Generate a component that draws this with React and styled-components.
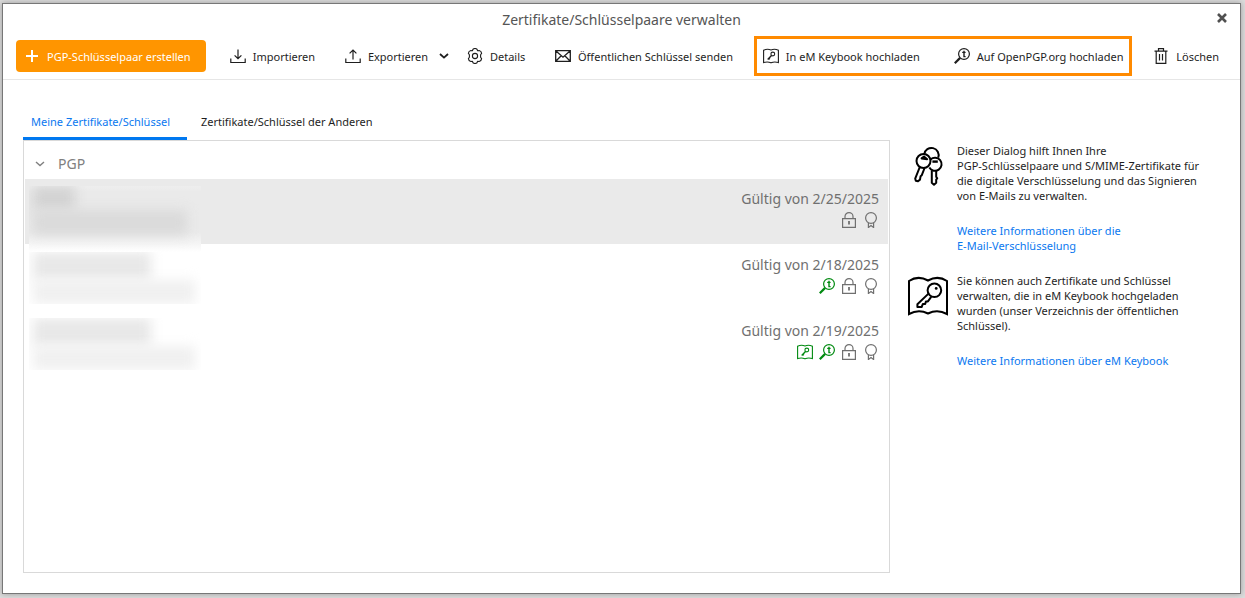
import React, { Component } from 'react'
import styled, { createGlobalStyle } from 'styled-components'

const GlobalStyle = createGlobalStyle`
  * {
    box-sizing: border-box;
  }
  body {
    margin: 0;
    background-color: #dcdcdc;
    color: #1e1e1e;
    font-family: "Noto Sans", "Open Sans", sans-serif;
    font-size: 11px;
    line-height: 15px;
  }
  button {
    padding: 0;
    border: 0;
    background: none;
    color: inherit;
    font: inherit;
    white-space: nowrap;
    cursor: pointer;
  }
  p, h1, h2, ul {
    margin: 0;
    padding: 0;
    font: inherit;
    list-style: none;
  }
`
const Page = styled.div`
  display: flex;
  min-height: 100vh;
  padding: 3px 4px 4px 2px;
`
const Dialog = styled.main`
  flex: 1;
  min-width: 0;
  display: flex;
  flex-direction: column;
  border: 1px solid #777777;
  background-color: white;
  box-shadow: 0 0 6px rgba(0, 0, 0, 0.3);
`
const TitleBar = styled.header`
  display: grid;
  grid-template-columns: 36px 1fr 36px;
  align-items: center;
  height: 32px;
`
const Title = styled.h1`
  grid-column: 2;
  color: #555555;
  font-size: 14px;
  line-height: 20px;
  text-align: center;
`
const CloseButton = styled.button`
  display: flex;
  align-items: center;
  justify-content: center;
  height: 24px;
  margin-bottom: 4px;
  color: #505050;
`
const Toolbar = styled.nav`
  display: flex;
  align-items: center;
  justify-content: space-between;
  height: 44px;
  padding: 0 21px 3px 13px;
  border-bottom: 1px solid #e6e6e6;
`
const PrimaryButton = styled.button`
  display: flex;
  align-items: center;
  gap: 7px;
  flex: none;
  width: 190px;
  height: 32px;
  margin-right: -6px;
  padding: 0 8px;
  border-radius: 4px;
  background-color: #ff9500;
  color: white;
`
const ToolButton = styled.button`
  display: flex;
  align-items: center;
  gap: 7px;
  height: 32px;
`
const DropArrow = styled.span`
  margin: 0 -12px 0 4px;
`
const Highlight = styled.div`
  display: flex;
  align-items: center;
  gap: 34px;
  height: 40px;
  margin: 0 -9px;
  padding: 0 6px;
  border: 3px solid #ff8a00;
`
const Content = styled.div`
  flex: 1;
  display: flex;
  gap: 18px;
  padding: 24px 28px 20px 20px;
`
const ListColumn = styled.section`
  flex: 1;
  min-width: 0;
  display: flex;
  flex-direction: column;
`
const Tabs = styled.div`
  display: flex;
  gap: 6px;
`
const Tab = styled.button`
  height: 36px;
  padding: 1px 17px 0 8px;
  border-bottom: 3px solid ${props => props.$active ? '#0078f0' : 'transparent'};
  color: ${props => props.$active ? '#0a78f0' : '#1e1e1e'};
`
const Panel = styled.div`
  flex: 1;
  padding: 0 1px;
  border: 1px solid #d9d9d9;
`
const GroupButton = styled.button`
  display: flex;
  align-items: center;
  gap: 13px;
  height: 38px;
  padding: 7px 0 0 10px;
  color: #808080;
  font-size: 14px;
`
const Row = styled.li`
  display: flex;
  justify-content: space-between;
  height: 66px;
  padding: 7px 9px 0 4px;
  background: ${props => props.$selected ? 'linear-gradient(#eaeaea 65px, white 65px)' : 'none'};
`
const Redacted = styled.div`
  width: 172px;
  height: ${props => props.$selected ? 66 : 52}px;
  overflow: hidden;
  background: ${props => props.$selected ? 'linear-gradient(#eeeeee, #eaeaea 6px, #eaeaea 46px, #f5f5f5 58px, white)' : 'none'};
`
const Smudge = styled.div`
  width: ${props => props.$width}px;
  height: ${props => props.$height}px;
  margin-left: 4px;
  background-color: ${props => props.$color};
  filter: blur(6px);
`
const Validity = styled.div`
  display: flex;
  flex-direction: column;
  align-items: flex-end;
  gap: 1px;
  padding-top: 1px;
  color: #707070;
  font-size: 14px;
  line-height: 24px;
`
const RowIcons = styled.div`
  display: flex;
  gap: 6px;
  color: #707070;
`
const Green = styled.span`
  display: flex;
  color: #008a10;
`
const Sidebar = styled.aside`
  flex: 0 0 304px;
  display: flex;
  flex-direction: column;
  gap: 20px;
  padding-top: 39px;
`
const Hint = styled.div`
  display: grid;
  grid-template-columns: 40px 1fr;
  gap: 9px;
`
const HintIcon = styled.div`
  padding-top: 3px;
  color: black;
`
const HintText = styled.div`
  display: flex;
  flex-direction: column;
  gap: 20px;
`
const Link = styled.a`
  color: #0a78f0;
  text-decoration: none;
`
const Svg = styled.svg`
  display: block;
  flex: none;
  fill: none;
  stroke: currentColor;
`

const Icon = ({ size = 16, children, ...rest }) => (
  <Svg width={size} height={size} viewBox={`0 0 ${size} ${size}`} aria-hidden='true' {...rest}>
    {children}
  </Svg>
)

const PlusIcon = () => (
  <Icon strokeWidth='2'><path d='M8 2v12M2 8h12' /></Icon>
)
const CloseIcon = () => (
  <Icon size={10} strokeWidth='2.6'><path d='M1 1l8 8M9 1l-8 8' /></Icon>
)
const ImportIcon = () => (
  <Icon strokeWidth='1.2'>
    <path d='M8 1.5v9.2M4.6 7.3L8 10.7l3.4-3.4M.8 10.5v4h14.4v-4' />
  </Icon>
)
const ExportIcon = () => (
  <Icon strokeWidth='1.2'>
    <path d='M8 11.5V2M4.6 5.4L8 2l3.4 3.4M.8 10.5v4h14.4v-4' />
  </Icon>
)
const ChevronIcon = ({ bold }) => (
  <Icon size={10} strokeWidth={bold ? 1.8 : 1.4}><path d='M1 3l4 3.6L9 3' /></Icon>
)
const GearIcon = () => (
  <Icon strokeWidth='1.1'>
    <path d='M6 1.2Q8-.2 10 1.2l.6 1.5 1.6-.2q2.2.6 2.4 2.9l-1 1.4v2.4l1 1.4q-.2 2.3-2.4 2.9l-1.6-.2-.6 1.5Q8 16.2 6 14.8l-.6-1.5-1.6.2q-2.2-.6-2.4-2.9l1-1.4V6.8l-1-1.4q.2-2.3 2.4-2.9l1.6.2z' strokeLinejoin='round' />
    <circle cx='8' cy='8' r='2.6' />
  </Icon>
)
const MailIcon = () => (
  <Icon strokeWidth='1.3'>
    <path d='M.7 2.7h14.6v10.6H.7zM1 3l7 6.2L15 3M1 13l5.2-5.3M15 13L9.8 7.7' />
  </Icon>
)
const KeybookIcon = () => (
  <Icon strokeWidth='1.1'>
    <path d='M.6 2.2Q4.5.4 8 2 11.5.4 15.4 2.2V14.6Q11.5 13.2 8 14.8 4.5 13.2.6 14.6z' />
    <circle cx='9.8' cy='6' r='1.9' />
    <path d='M8.5 7.4l-3.8 4M5.8 10.2l1.1 1' strokeWidth='1.4' />
  </Icon>
)
const OpenPgpIcon = () => (
  <Icon strokeWidth='1.2'>
    <circle cx='10' cy='6' r='5.4' />
    <path d='M6.1 9.9L.8 15.2' strokeWidth='2.2' />
    <path d='M10 2.8v5.8h1.6' strokeWidth='1.4' />
    <path d='M8.2 4.4h3.4' />
  </Icon>
)
const TrashIcon = () => (
  <Icon strokeWidth='1.2'>
    <path d='M1.5 3.2h13M5.5 3V.7h5V3M3.2 3.4v11.9h9.6V3.4M6.5 6v6.5M9.5 6v6.5' />
  </Icon>
)
const LockIcon = () => (
  <Icon strokeWidth='1.2'>
    <path d='M1.6 6.6h12.8v8.8H1.6zM4 6.5V4.4a4 3.8 0 0 1 8 0v2.1' />
    <path d='M8 9v3.5' strokeWidth='1.8' />
  </Icon>
)
const RibbonIcon = () => (
  <Icon strokeWidth='1.2'>
    <circle cx='8' cy='6' r='5.4' />
    <path d='M5.4 11v4.5L8 13.6l2.6 1.9V11' />
  </Icon>
)
const KeysIcon = () => (
  <Icon size={40} strokeWidth='2' strokeLinejoin='round'>
    <path d='M16.3 8.2a7.2 7.2 0 1 1 13.9 3.4' />
    <circle cx='15.5' cy='15' r='7' />
    <path d='M22.5 13.4a6.6 6.6 0 1 1-1.2 8.2' />
    <path d='M11.8 21L7.2 32.6l.6 2.2 2.2.4 2-1.6.6-3.4 1.2-1 2.8-7.2' />
    <path d='M23.8 24.2v12.6l2.2 2 2.2-2v-3.2l1-1.2-1-1.6v-6.2' />
    <path d='M16 10.6l3.2 2.6-5.6-.8z' fill='currentColor' />
    <path d='M24.4 15.6h5.4' strokeWidth='2.4' />
  </Icon>
)
const BigBookIcon = () => (
  <Icon size={40} strokeWidth='2'>
    <path d='M1 5Q10-1 20 4.5 30-1 39 5V38Q29.5 33 20 37.5 10.5 33 1 38z' />
    <circle cx='26.4' cy='14.3' r='6.8' />
    <circle cx='28.2' cy='12.4' r='1.4' fill='currentColor' stroke='none' />
    <path d='M20.5 17.6L9.4 28.2v2.9h4.2l1.2-3h2.4l.7-2.7h2l3.3-4.6' strokeLinejoin='round' />
  </Icon>
)

const certificates = [
  { date: '2/25/2025', selected: true, smudges: [[42, 24, '#d3d3d3'], [154, 25, '#dadada']] },
  { date: '2/18/2025', openPgp: true, smudges: [[118, 28, '#e8e8e8'], [162, 24, '#f0f0f0']] },
  { date: '2/19/2025', openPgp: true, keybook: true, smudges: [[118, 28, '#e8e8e8'], [162, 24, '#f0f0f0']] }
]

const CertificateRow = ({ date, selected, openPgp, keybook, smudges }) => (
  <Row $selected={selected}>
    <Redacted $selected={selected}>
      {smudges.map(([width, height, color]) => (
        <Smudge key={width} $width={width} $height={height} $color={color} />
      ))}
    </Redacted>
    <Validity>
      <span>Gültig von {date}</span>
      <RowIcons>
        {keybook && <Green><KeybookIcon /></Green>}
        {openPgp && <Green><OpenPgpIcon /></Green>}
        <LockIcon />
        <RibbonIcon />
      </RowIcons>
    </Validity>
  </Row>
)

class App extends Component {
  state = {
    tab: 'mine'
  }
  selectTab = (tab) => {
    this.setState({ tab })
  }
  render() {
    const { tab } = this.state
    return (
      <Page>
        <GlobalStyle />
        <Dialog>
          <TitleBar>
            <Title>Zertifikate/Schlüsselpaare verwalten</Title>
            <CloseButton aria-label='Schließen'><CloseIcon /></CloseButton>
          </TitleBar>
          <Toolbar>
            <PrimaryButton><PlusIcon />PGP-Schlüsselpaar erstellen</PrimaryButton>
            <ToolButton><ImportIcon />Importieren</ToolButton>
            <ToolButton>
              <ExportIcon />Exportieren
              <DropArrow><ChevronIcon bold /></DropArrow>
            </ToolButton>
            <ToolButton><GearIcon />Details</ToolButton>
            <ToolButton><MailIcon />Öffentlichen Schlüssel senden</ToolButton>
            <Highlight>
              <ToolButton><KeybookIcon />In eM Keybook hochladen</ToolButton>
              <ToolButton><OpenPgpIcon />Auf OpenPGP.org hochladen</ToolButton>
            </Highlight>
            <ToolButton><TrashIcon />Löschen</ToolButton>
          </Toolbar>
          <Content>
            <ListColumn>
              <Tabs role='tablist'>
                <Tab role='tab' aria-selected={tab === 'mine'} $active={tab === 'mine'} onClick={() => this.selectTab('mine')}>
                  Meine Zertifikate/Schlüssel
                </Tab>
                <Tab role='tab' aria-selected={tab === 'others'} $active={tab === 'others'} onClick={() => this.selectTab('others')}>
                  Zertifikate/Schlüssel der Anderen
                </Tab>
              </Tabs>
              <Panel>
                <GroupButton><ChevronIcon />PGP</GroupButton>
                <ul>
                  {certificates.map(item => <CertificateRow key={item.date} {...item} />)}
                </ul>
              </Panel>
            </ListColumn>
            <Sidebar>
              <Hint>
                <HintIcon><KeysIcon /></HintIcon>
                <HintText>
                  <p>
                    Dieser Dialog hilft Ihnen Ihre<br />
                    PGP-Schlüsselpaare und S/MIME-Zertifikate für<br />
                    die digitale Verschlüsselung und das Signieren<br />
                    von E-Mails zu verwalten.
                  </p>
                  <Link href='#verschluesselung'>
                    Weitere Informationen über die<br />E-Mail-Verschlüsselung
                  </Link>
                </HintText>
              </Hint>
              <Hint>
                <HintIcon><BigBookIcon /></HintIcon>
                <HintText>
                  <p>
                    Sie können auch Zertifikate und Schlüssel<br />
                    verwalten, die in eM Keybook hochgeladen<br />
                    wurden (unser Verzeichnis der öffentlichen<br />
                    Schlüssel).
                  </p>
                  <Link href='#keybook'>Weitere Informationen über eM Keybook</Link>
                </HintText>
              </Hint>
            </Sidebar>
          </Content>
        </Dialog>
      </Page>
    )
  }
}

export default App
